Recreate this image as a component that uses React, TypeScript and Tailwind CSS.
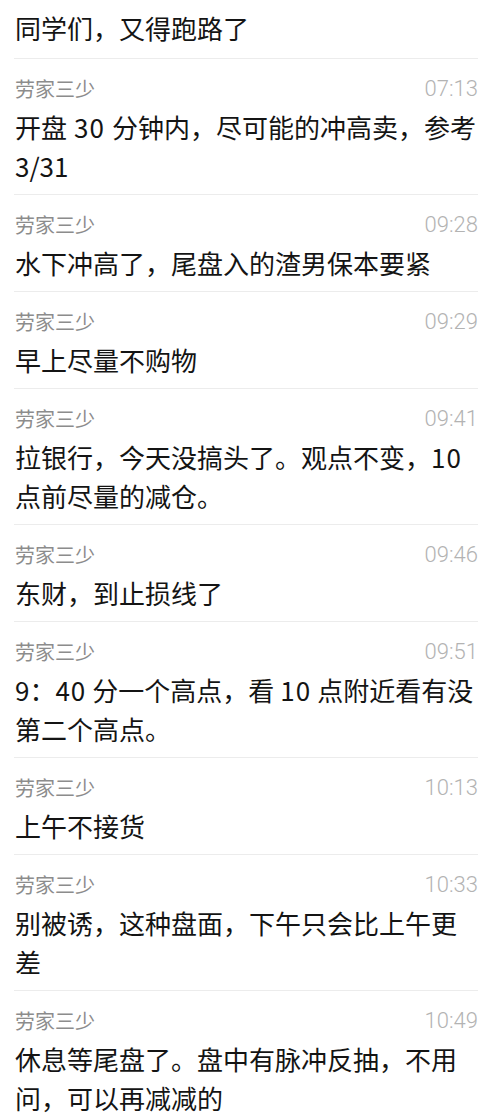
import React from "react";

type Item = { time: string; lines: React.ReactNode[] };

const N = ({ children, className = "" }: { children: React.ReactNode; className?: string }) => (
  <span className={"tracking-[1px] " + className}>{children}</span>
);

const items: Item[] = [
  {
    time: "07:13",
    lines: [
      <>开盘<N className="mx-[7px]">30</N>分钟内，尽可能的冲高卖，参考</>,
      <>3/31</>,
    ],
  },
  { time: "09:28", lines: [<>水下冲高了，尾盘入的渣男保本要紧</>] },
  { time: "09:29", lines: [<>早上尽量不购物</>] },
  {
    time: "09:41",
    lines: [<>拉银行，今天没搞头了。观点不变，<N>10</N></>, <>点前尽量的减仓。</>],
  },
  { time: "09:46", lines: [<>东财，到止损线了</>] },
  {
    time: "09:51",
    lines: [
      <>9：<N className="mr-[6px]">40</N>分一个高点，看<N className="mx-[6px]">10</N>点附近看有没</>,
      <>第二个高点。</>,
    ],
  },
  { time: "10:13", lines: [<>上午不接货</>] },
  {
    time: "10:33",
    lines: [<>别被诱，这种盘面，下午只会比上午更</>, <>差</>],
  },
  {
    time: "10:49",
    lines: [<>休息等尾盘了。盘中有脉冲反抽，不用</>, <>问，可以再减减的</>],
  },
];

export default function App() {
  return (
    <div
      className="w-[500px] h-[1115px] overflow-hidden bg-white pl-[14px] pr-[22px]"
      style={{ fontFamily: '"Noto Sans CJK SC", "Noto Sans", sans-serif' }}
    >
      <div className="pl-[1px] pt-[8px] pb-[11px] text-[26px] leading-[39px] text-[#141414]">
        同学们，又得跑路了
      </div>
      {items.map((it, i) => (
        <div key={i} className="border-t border-[#ececec] pt-[16px] pb-[9px]">
          <div className="flex items-center justify-between h-[28px] pl-[1px]">
            <span className="text-[20px] leading-[28px] text-[#8c8c8c]">劳家三少</span>
            <span
              className="text-[22px] leading-[28px] font-light text-[#b3b3b3]"
              style={{ fontFamily: 'Roboto, "Liberation Sans", sans-serif' }}
            >
              {it.time}
            </span>
          </div>
          <div className="mt-[4px] pl-[1px] text-[26px] leading-[39px] text-[#141414]">
            {it.lines.map((l, j) => (
              <div key={j} className="whitespace-nowrap">{l}</div>
            ))}
          </div>
        </div>
      ))}
    </div>
  );
}
